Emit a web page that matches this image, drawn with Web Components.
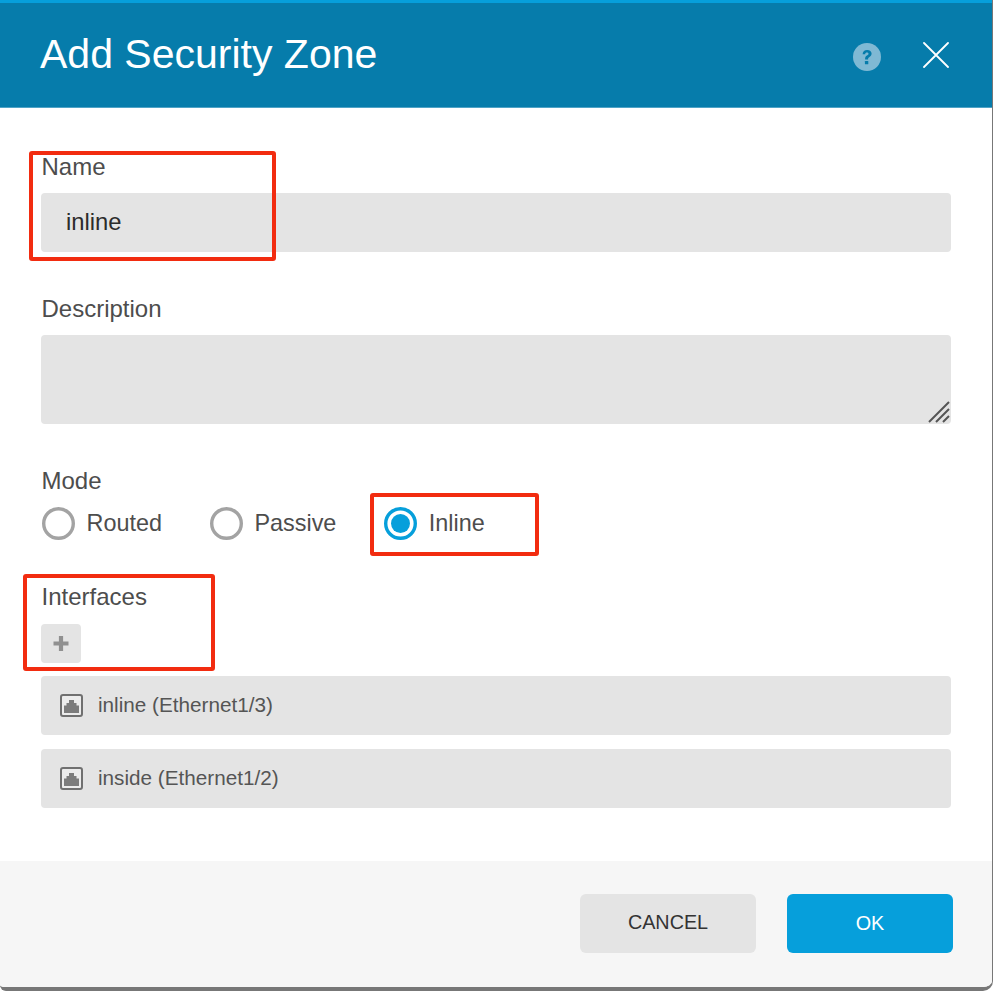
<!DOCTYPE html>
<html><head><meta charset="utf-8">
<style>
html,body{margin:0;padding:0;background:#fff;}
body{width:999px;height:991px;overflow:hidden;font-family:"Liberation Sans",Arial,sans-serif;}
</style></head><body>
<zone-dialog heading="Add Security Zone">
  <form-field label="Name" class="f1"><text-box value="inline" h="59"></text-box></form-field>
  <form-field label="Description" class="f2"><text-box h="89" resize></text-box></form-field>
  <form-field label="Mode" class="f3">
    <radio-group>
      <radio-opt label="Routed"></radio-opt>
      <radio-opt label="Passive"></radio-opt>
      <radio-opt label="Inline" checked></radio-opt>
    </radio-group>
  </form-field>
  <form-field label="Interfaces" class="f4">
    <add-button></add-button>
    <iface-row label="inline (Ethernet1/3)"></iface-row>
    <iface-row label="inside (Ethernet1/2)"></iface-row>
  </form-field>
</zone-dialog>
<script>
function def(name, html){
  customElements.define(name, class extends HTMLElement{
    connectedCallback(){
      if(this.shadowRoot) return;
      const r=this.attachShadow({mode:'open'});
      r.innerHTML=html(this);
    }
  });
}
def('zone-dialog', el=>`<style>
:host{display:block;position:relative;width:992px;height:987px;background:#fff;box-sizing:content-box;border-right:1.5px solid #777;border-bottom:4px solid #777;border-bottom-right-radius:10px;border-bottom-left-radius:6px;overflow:hidden}
.head{background:#067cab;border-top:3px solid #069fdb;box-sizing:border-box;height:108px;display:flex;align-items:center;padding:0 43px 0 40px;color:#fff;border-bottom:1px solid #4fa3c6}
h1{margin:0;font:400 41px/1 "Liberation Sans",Arial,sans-serif;flex:1;position:relative;top:-1px}
.q{margin-right:42px;display:block;position:relative;top:1.5px}
.x{display:block;position:relative;top:-.5px}
.body{height:753px;box-sizing:border-box;padding:45px 41px 0 41px;display:flex;flex-direction:column}
::slotted(.f1){margin-bottom:43px}
::slotted(.f2){margin-bottom:43px}
::slotted(.f3){margin-bottom:38px}
.foot{height:126px;background:#f6f6f6;box-sizing:border-box;display:flex;justify-content:flex-end;align-items:flex-start;padding:33px 39px 0 0;gap:31px}
.btn{height:59px;border-radius:6px;display:flex;align-items:center;justify-content:center;font-size:19.8px}
.btn span{position:relative;top:-1px}
.c{width:176px;background:#e4e4e4;color:#333}
.o{width:166px;background:#069fdb;color:#fff}
.mark{position:absolute;border:4px solid #f22c10;border-radius:3px;box-sizing:border-box;pointer-events:none}
</style>
<div class="head"><h1>${el.getAttribute('heading')}</h1>
<svg class="q" width="28" height="28" viewBox="0 0 28 28"><circle cx="14" cy="14" r="14" fill="#7fb9d4"/><path d="M9.6 11.2c.1-2.8 2-4.3 4.6-4.3 2.6 0 4.4 1.5 4.4 3.7 0 1.6-.8 2.5-2.1 3.3-1.1.7-1.4 1.1-1.4 2.1v.4h-3v-.6c0-1.7.6-2.5 1.9-3.3 1-.6 1.5-1.1 1.5-1.8 0-.8-.7-1.3-1.6-1.3-1 0-1.7.6-1.8 1.8z" fill="#067cab"/><rect x="11.9" y="18" width="3.4" height="3.3" rx=".6" fill="#067cab"/></svg>
<svg class="x" width="26" height="26" viewBox="0 0 26 26"><path d="M1 1 25 25M25 1 1 25" stroke="#fff" stroke-width="1.8" stroke-linecap="round" fill="none"/></svg>
</div>
<div class="body"><slot></slot></div>
<div class="foot"><div class="btn c"><span>CANCEL</span></div><div class="btn o">OK</div></div>
<div class="mark" style="left:29px;top:151px;width:247px;height:110px"></div>
<div class="mark" style="left:370px;top:493px;width:169px;height:63px"></div>
<div class="mark" style="left:23px;top:574px;width:192px;height:97px"></div>`);
def('form-field', el=>`<style>
:host{display:block;color:#4d4d4d}
.l{font-size:24px;line-height:28px;height:28px;margin-bottom:12px;padding-left:.5px}
</style><div class="l">${el.getAttribute('label')}</div><slot></slot>`);
def('text-box', el=>`<style>
:host{display:block;position:relative;height:${el.getAttribute('h')}px;background:#e4e4e4;border-radius:4px;padding-left:25px;box-sizing:border-box;font-size:23.8px;line-height:${el.getAttribute('h')-1}px;color:#2b2b2b}
svg{position:absolute;right:1px;bottom:1px}
</style>${el.getAttribute('value')||''}${el.hasAttribute('resize')?'<svg width="22" height="22" viewBox="0 0 22 22"><path d="M1 21 21 1M8 21 21 8M15 21l6-6" stroke="#555" stroke-width="2" fill="none"/></svg>':''}`);
def('radio-group', el=>`<style>
:host{display:flex;gap:48px;margin-top:-6px;height:44px;align-items:center;padding-left:1px}
</style><slot></slot>`);
def('radio-opt', el=>{const on=el.hasAttribute('checked');return `<style>
:host{display:flex;align-items:center;gap:11.500px;font-size:23.4px;color:#4d4d4d}
svg{display:block}
</style><svg width="33" height="33" viewBox="0 0 33 33">${on?'<circle cx="16.5" cy="16.5" r="14.8" fill="#fff" stroke="#069fdb" stroke-width="3.4"/><circle cx="16.5" cy="16.5" r="9.5" fill="#069fdb"/>':'<circle cx="16.5" cy="16.5" r="14.8" fill="#fff" stroke="#a3a3a3" stroke-width="3.4"/>'}</svg><span>${el.getAttribute('label')}</span>`});
def('add-button', el=>`<style>
:host{display:block;width:40px;height:39px;background:#e4e4e4;border-radius:4px;margin-bottom:13px;margin-top:13px}
svg{display:block}
</style><svg width="40" height="39" viewBox="0 0 40 39"><path d="M20 12v15M12.500 19.500h15" stroke="#909090" stroke-width="4.200" fill="none"/></svg>`);
def('iface-row', el=>`<style>
:host{display:flex;align-items:center;height:59px;background:#e4e4e4;border-radius:4px;margin-bottom:14px;padding-left:19px;box-sizing:border-box;font-size:20.7px;color:#555;gap:15px}
svg{display:block;flex:none}
span{position:relative;top:-1px}
</style><svg width="23" height="23" viewBox="0 0 23 23"><rect x="1" y="1" width="21" height="21" rx="2" fill="#ececec" stroke="#707070" stroke-width="2"/><path d="M4 19v-7.500h2.500V9H9V6h5v3h2.500v2.500H19V19z" fill="#7c7c7c"/></svg><span>${el.getAttribute('label')}</span>`);
</script>
</body></html>
